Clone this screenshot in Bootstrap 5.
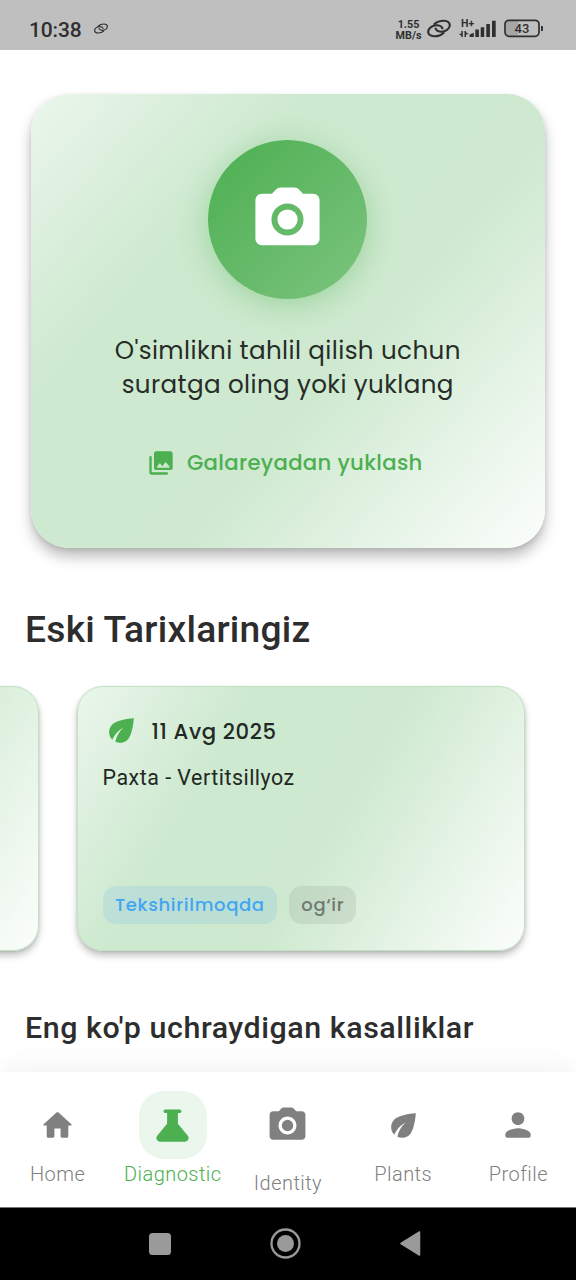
<!DOCTYPE html>
<html lang="uz">
<head>
<meta charset="utf-8">
<meta name="viewport" content="width=device-width, initial-scale=1">
<title>Diagnostic</title>
<link href="https://cdn.jsdelivr.net/npm/bootstrap@5.3.0/dist/css/bootstrap.min.css" rel="stylesheet">
<style>
  body { height: 1280px; overflow: hidden; background: #fff; color: #2d2d2d; font-family: Roboto, "Liberation Sans", sans-serif; }
  svg { display: block; flex: none; }
  .geo { font-family: Poppins, Inter, "Open Sans", sans-serif; }
  .statusbar { height: 50px; background: #bfbfbf; padding: 9px 32px 0 29px; color: #2f2f2f; }
  .clock { font-size: 21px; font-weight: 500; line-height: 42px; letter-spacing: -.15px; }
  .speed { font-size: 10.8px; font-weight: 700; line-height: 11px; width: 27px; margin-top: 10px; }
  .hero { margin: 43.5px 31px 0 30.5px; height: 454.5px; border-radius: 38px; padding-top: 46.4px;
    background: linear-gradient(131.5deg, #ebf6ec 0%, #cde9cf 30%, #cee9cf 60%, #fcfefc 100%);
    box-shadow: 0 9px 14px rgba(0,0,0,.25), 0 2px 5px rgba(0,0,0,.1); }
  .shutter { width: 159px; height: 159px; background: linear-gradient(135deg, #4caf50, #7cc47f); color: #fff;
    box-shadow: 0 6px 30px rgba(76,175,80,.38); }
  .prompt { margin-top: 35px; font-size: 24.6px; line-height: 34px; letter-spacing: .39px; color: #262c27; }
  .gallery { margin-top: 46px; font-size: 21.2px; line-height: 30px; letter-spacing: .33px; font-weight: 500; color: #4caf50; gap: 12px; padding-right: 6px; }
  .sect-a { margin: 59px 25px 0; font-size: 37.2px; line-height: 44px; font-weight: 500; letter-spacing: .24px; }
  .sect-b { margin: 57px 25px 0; font-size: 30.4px; line-height: 40px; font-weight: 500; letter-spacing: .55px; }
  .strip { margin: 35px 0 0 -410px; width: 986px; gap: 38px; }
  .entry { width: 448.5px; height: 265px; flex: none; border: 1.6px solid #bfe2c1; border-radius: 26px; padding: 25px 25px 26px;
    background: linear-gradient(120.5deg, #ebf6ec 0%, #cde9cf 30%, #cee9cf 56%, #fcfefc 100%) border-box;
    box-shadow: 0 5px 7px rgba(0,0,0,.22), 0 1px 3px rgba(0,0,0,.12); color: #222823; }
  .date { font-size: 21.2px; line-height: 36px; font-weight: 500; letter-spacing: .58px; margin: 0 0 2px 12px; }
  .ailment { font-size: 21.4px; line-height: 28px; margin-top: 11px; letter-spacing: .51px; }
  .tag { height: 38px; line-height: 38px; border-radius: 13px; padding: 0 12px 0 12.5px; font-size: 18px; font-weight: 500; letter-spacing: .66px; }
  .tag-info { background: rgba(66,165,245,.13); color: #42a5f5; }
  .tag-mute { background: rgba(110,120,110,.14); color: #6e7a70; }
  .tabs { height: 135px; background: #fff; box-shadow: 0 -4px 26px rgba(0,0,0,.055); padding-top: 19px; z-index: 2; color: #808080; font-size: 20px; }
  .tab-item { width: 20%; letter-spacing: .45px; font-weight: 300; }
  .pill { width: 68px; height: 68px; border-radius: 25px; }
  .tab-item.active .pill { background: #ebf6ec; }
  .tab-item.active { color: #4caf50; }
  .tab-label { line-height: 30px; white-space: nowrap; }
  .tab-low { margin-top: 9px; }
  .sysnav { height: 73px; background: #000; border-top: 1px solid #777; padding-left: 149px; gap: 98px; }
</style>
</head>
<body class="d-flex flex-column">
<svg width="0" height="0" class="position-absolute">
  <symbol id="camera" viewBox="0 0 24 24"><circle cx="12" cy="12" r="3.15"/><path d="M20 4h-3.17l-1.24-1.35c-.37-.41-.91-.65-1.47-.65H9.88c-.56 0-1.1.24-1.48.65L7.17 4H4c-1.1 0-2 .9-2 2v12c0 1.1.9 2 2 2h16c1.1 0 2-.9 2-2V6c0-1.1-.9-2-2-2zm-8 13c-2.76 0-5-2.24-5-5s2.24-5 5-5 5 2.24 5 5-2.24 5-5 5z"/></symbol>
  <symbol id="leaf" viewBox="0 0 24 24"><path d="M6.05 8.05c-2.73 2.73-2.73 7.15-.02 9.88 1.47-3.4 4.09-6.24 7.36-7.93-2.77 2.34-4.71 5.61-5.39 9.32 2.6 1.23 5.8.78 7.95-1.37C19.43 14.47 20 4 20 4S9.53 4.57 6.05 8.05z"/></symbol>
  <symbol id="link" viewBox="0 0 24 18"><g fill="none" stroke="currentColor" stroke-width="2.1" stroke-linecap="round"><path d="M7.5 4.6C10 2 14 1.3 17 1.3C21 1.3 23 3.5 22.8 6C22.5 9.5 18.5 12.2 14.5 12.2C11.5 12.2 9.3 11 8.6 9.2"/><path d="M16.5 13.4C14 16 10 16.7 7 16.7C3 16.7 1 14.5 1.2 12C1.5 8.5 5.5 5.8 9.5 5.8C12.5 5.8 14.7 7 15.4 8.8"/></g></symbol>
</svg>

<header class="statusbar d-flex align-items-start flex-shrink-0">
  <span class="clock">10:38</span>
  <svg style="margin:14px 0 0 12px" width="14" height="11"><use href="#link"/></svg>
  <div class="ms-auto d-flex align-items-start">
    <div class="speed text-center">1.55<br>MB/s</div>
    <svg style="margin:10px 0 0 5px" width="24" height="19"><use href="#link"/></svg>
    <svg style="margin:8px 0 0 7px" width="38" height="22" fill="#2f2f2f">
      <text x="3" y="9.7" font-size="10.5" font-weight="700">H+</text>
      <path d="M3.3 14h1.5v6H3.300zM.8 17l2.7-.5v2.200zM6.500 14H8v6H6.500zM7.500 14.800l3 2.200-3 .7zM11.600 17.500l4.200-1.700V20h-4.200zM17.300 12.500h3.600V20h-3.600zM22.700 10.200h3.500V20h-3.500zM28.300 7h3.600v13h-3.600zM34 3.700h3.700V20H34z"/>
    </svg>
    <svg style="margin:10px 0 0 8px" width="40" height="19">
      <path d="M2 4q0-2.500 3-2.500h9v15H5q-3 0-3-2.500z" fill="#a6a6a6"/>
      <rect x="1" y="1.3" width="34" height="16" rx="4" fill="none" stroke="#2f2f2f" stroke-width="1.7"/>
      <path d="M37 7h1q1 0 1 1v3q0 1-1 1h-1z" fill="#2f2f2f"/>
      <text x="18" y="14" font-size="13" font-weight="500" text-anchor="middle" fill="#2f2f2f">43</text>
    </svg>
  </div>
</header>

<main class="flex-grow-1 overflow-hidden">
  <section class="hero d-flex flex-column align-items-center">
    <div class="shutter rounded-circle d-flex align-items-center justify-content-center flex-shrink-0">
      <svg width="77" height="77" fill="currentColor"><use href="#camera"/></svg>
    </div>
    <p class="prompt geo text-center mb-0 text-nowrap">O'simlikni tahlil qilish uchun<br>suratga oling yoki yuklang</p>
    <div class="gallery geo d-flex align-items-center">
      <svg width="28" height="28" viewBox="0 0 24 24" fill="currentColor"><path d="M22 16V4c0-1.1-.9-2-2-2H8c-1.1 0-2 .9-2 2v12c0 1.1.9 2 2 2h12c1.1 0 2-.9 2-2zm-10.6-3.47l1.63 2.18 2.58-3.22c.2-.25.58-.25.78 0l2.96 3.7c.26.33.03.81-.39.81H9c-.41 0-.65-.47-.4-.8l2-2.67c.2-.26.6-.26.8 0zM2 7v13c0 1.1.9 2 2 2h13c.55 0 1-.45 1-1s-.45-1-1-1H5c-.55 0-1-.45-1-1V7c0-.55-.45-1-1-1s-1 .45-1 1z"/></svg>
      <span>Galareyadan yuklash</span>
    </div>
  </section>

  <h2 class="sect-a">Eski Tarixlaringiz</h2>

  <section class="strip d-flex">
    <article class="entry"></article>
    <article class="entry d-flex flex-column">
      <div class="d-flex align-items-center">
        <svg class="mb-1" width="37" height="37" fill="#4caf50"><use href="#leaf"/></svg>
        <span class="date geo">11 Avg 2025</span>
      </div>
      <div class="ailment">Paxta - Vertitsillyoz</div>
      <div class="d-flex mt-auto" style="gap:12px">
        <span class="tag tag-info geo">Tekshirilmoqda</span>
        <span class="tag tag-mute geo">og‘ir</span>
      </div>
    </article>
  </section>

  <h3 class="sect-b">Eng ko'p uchraydigan kasalliklar</h3>
</main>

<nav class="tabs d-flex position-relative flex-shrink-0">
  <div class="tab-item d-flex flex-column align-items-center">
    <div class="pill d-flex align-items-center justify-content-center"><svg width="37" height="37" viewBox="0 0 24 24" fill="currentColor"><path d="M10 19v-5h4v5c0 .55.45 1 1 1h3c.55 0 1-.45 1-1v-7h1.7c.46 0 .68-.57.33-.87L12.67 3.6c-.38-.34-.96-.34-1.34 0l-8.36 7.53c-.34.3-.13.87.33.87H5v7c0 .55.45 1 1 1h3c.55 0 1-.45 1-1z"/></svg></div>
    <span class="tab-label">Home</span>
  </div>
  <div class="tab-item active d-flex flex-column align-items-center">
    <div class="pill d-flex align-items-center justify-content-center"><svg width="43" height="43" viewBox="0 0 24 24" fill="currentColor"><path d="M20.54 17.73 15 11V5h1c.55 0 1-.45 1-1s-.45-1-1-1H8c-.55 0-1 .45-1 1s.45 1 1 1h1v6l-5.54 6.73C3.14 18.12 3 18.56 3 18.99 3.01 20.02 3.81 21 5 21h14c1.19 0 1.99-.98 2-2.01 0-.43-.14-.87-.46-1.26z"/></svg></div>
    <span class="tab-label">Diagnostic</span>
  </div>
  <div class="tab-item d-flex flex-column align-items-center">
    <div class="pill d-flex align-items-center justify-content-center"><svg width="43" height="43" fill="currentColor"><use href="#camera"/></svg></div>
    <span class="tab-label tab-low">Identity</span>
  </div>
  <div class="tab-item d-flex flex-column align-items-center">
    <div class="pill d-flex align-items-center justify-content-center"><svg width="37" height="37" fill="currentColor"><use href="#leaf"/></svg></div>
    <span class="tab-label">Plants</span>
  </div>
  <div class="tab-item d-flex flex-column align-items-center">
    <div class="pill d-flex align-items-center justify-content-center"><svg width="38" height="38" viewBox="0 0 24 24" fill="currentColor"><path d="M12 12c2.21 0 4-1.79 4-4s-1.79-4-4-4-4 1.79-4 4 1.79 4 4 4zm0 2c-2.67 0-8 1.34-8 4v1c0 .55.45 1 1 1h14c.55 0 1-.45 1-1v-1c0-2.66-5.33-4-8-4z"/></svg></div>
    <span class="tab-label">Profile</span>
  </div>
</nav>

<footer class="sysnav d-flex align-items-center flex-shrink-0">
  <svg width="23" height="23"><rect width="22" height="22" rx="3.5" fill="#9a9a9a"/></svg>
  <svg width="32" height="32" fill="#9a9a9a"><circle cx="15.5" cy="15.5" r="14" fill="none" stroke="#9a9a9a" stroke-width="2.3"/><circle cx="15.5" cy="15.5" r="8.5"/></svg>
  <svg width="24" height="28"><path d="M1 13.5L19.5 2V25z" fill="#9a9a9a" stroke="#9a9a9a" stroke-width="1.5" stroke-linejoin="round"/></svg>
</footer>
<script src="https://cdn.jsdelivr.net/npm/bootstrap@5.3.0/dist/js/bootstrap.bundle.min.js"></script>
</body>
</html>
